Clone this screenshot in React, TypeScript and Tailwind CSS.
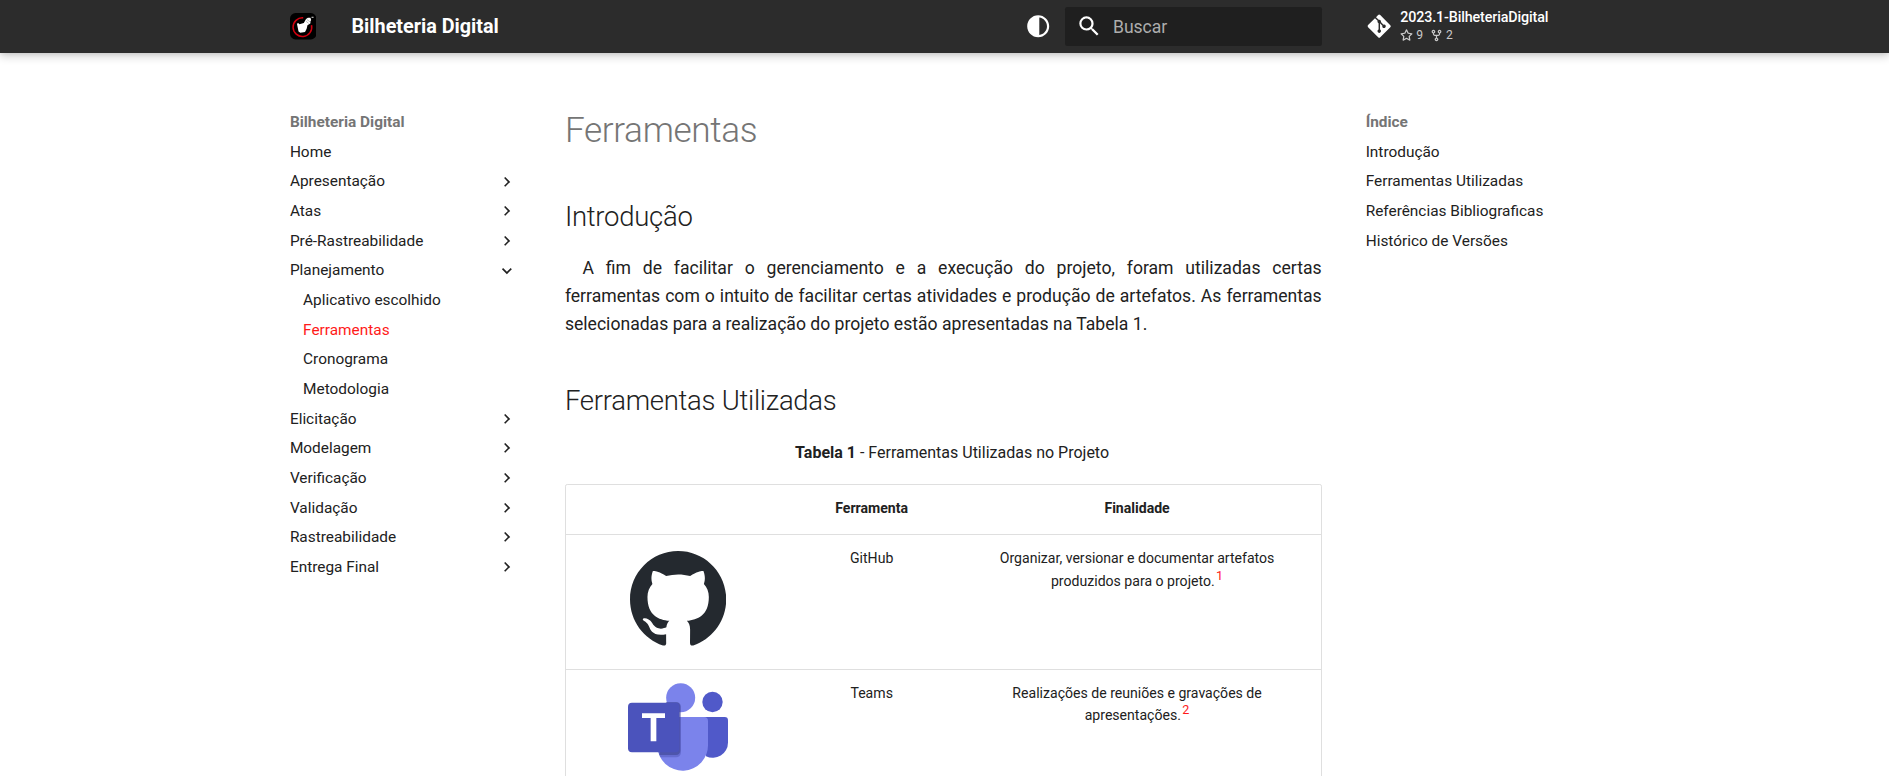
import type { ReactNode } from "react";
import { FaGitAlt } from "react-icons/fa";

type NavItem = { label: string; kind?: "closed" | "open" | "sub" | "active" };

const nav: NavItem[] = [
  { label: "Home" },
  { label: "Apresentação", kind: "closed" },
  { label: "Atas", kind: "closed" },
  { label: "Pré-Rastreabilidade", kind: "closed" },
  { label: "Planejamento", kind: "open" },
  { label: "Aplicativo escolhido", kind: "sub" },
  { label: "Ferramentas", kind: "active" },
  { label: "Cronograma", kind: "sub" },
  { label: "Metodologia", kind: "sub" },
  { label: "Elicitação", kind: "closed" },
  { label: "Modelagem", kind: "closed" },
  { label: "Verificação", kind: "closed" },
  { label: "Validação", kind: "closed" },
  { label: "Rastreabilidade", kind: "closed" },
  { label: "Entrega Final", kind: "closed" },
];

const toc = ["Introdução", "Ferramentas Utilizadas", "Referências Bibliograficas", "Histórico de Versões"];

function Icon({ d, className, box = "0 0 24 24" }: { d: string; className: string; box?: string }) {
  return (
    <svg viewBox={box} className={className} fill="currentColor">
      <path d={d} />
    </svg>
  );
}

const CHEVRON = "M8.59 16.58 13.17 12 8.59 7.41 10 6l6 6-6 6-1.41-1.42Z";
const CONTRAST =
  "M12 22c5.52 0 10-4.48 10-10S17.52 2 12 2 2 6.48 2 12s4.48 10 10 10m1-17.93c3.94.49 7 3.85 7 7.93s-3.05 7.44-7 7.93V4.07Z";
const MAGNIFY =
  "M9.5 3A6.5 6.5 0 0 1 16 9.5c0 1.61-.59 3.09-1.56 4.23l.27.27h.79l5 5-1.5 1.5-5-5v-.79l-.27-.27A6.516 6.516 0 0 1 9.5 16 6.5 6.5 0 0 1 3 9.5 6.5 6.5 0 0 1 9.5 3m0 2C7 5 5 7 5 9.5S7 14 9.5 14 14 12 14 9.5 12 5 9.5 5Z";
const STAR =
  "M8 .25a.75.75 0 0 1 .673.418l1.882 3.815 4.21.612a.75.75 0 0 1 .416 1.279l-3.046 2.97.719 4.192a.751.751 0 0 1-1.088.791L8 12.347l-3.766 1.98a.75.75 0 0 1-1.088-.79l.72-4.194L.818 6.374a.75.75 0 0 1 .416-1.28l4.21-.611L7.327.668A.75.75 0 0 1 8 .25Zm0 2.445L6.615 5.5a.75.75 0 0 1-.564.41l-3.097.45 2.24 2.184a.75.75 0 0 1 .216.664l-.528 3.084 2.769-1.456a.75.75 0 0 1 .698 0l2.77 1.456-.53-3.084a.75.75 0 0 1 .216-.664l2.24-2.183-3.096-.45a.75.75 0 0 1-.564-.41L8 2.694Z";
const FORK =
  "M5 5.372v.878c0 .414.336.75.75.75h4.5a.75.75 0 0 0 .75-.75v-.878a2.25 2.25 0 1 1 1.5 0v.878a2.25 2.25 0 0 1-2.25 2.25h-1.5v2.128a2.251 2.251 0 1 1-1.5 0V8.5h-1.5A2.25 2.25 0 0 1 3.5 6.25v-.878a2.25 2.25 0 1 1 1.5 0ZM5 3.25a.75.75 0 1 0-1.5 0 .75.75 0 0 0 1.5 0Zm6.75.75a.75.75 0 1 0 0-1.5.75.75 0 0 0 0 1.5Zm-3 8.75a.75.75 0 1 0-1.5 0 .75.75 0 0 0 1.5 0Z";
const GITHUB =
  "M48.854 0C21.839 0 0 22 0 49.217c0 21.756 13.993 40.172 33.405 46.69 2.427.49 3.316-1.059 3.316-2.362 0-1.141-.08-5.052-.08-9.127-13.59 2.934-16.42-5.867-16.42-5.867-2.184-5.704-5.42-7.17-5.42-7.17-4.448-3.015.324-3.015.324-3.015 4.934.326 7.523 5.052 7.523 5.052 4.367 7.496 11.404 5.378 14.235 4.074.404-3.178 1.699-5.378 3.074-6.6-10.839-1.141-22.243-5.378-22.243-24.283 0-5.378 1.94-9.778 5.014-13.2-.485-1.222-2.184-6.275.486-13.038 0 0 4.125-1.304 13.426 5.052a46.97 46.97 0 0 1 12.214-1.63c4.125 0 8.33.571 12.213 1.63 9.302-6.356 13.427-5.052 13.427-5.052 2.67 6.763.97 11.816.485 13.038 3.155 3.422 5.015 7.822 5.015 13.2 0 18.905-11.404 23.06-22.324 24.283 1.78 1.548 3.316 4.481 3.316 9.126 0 6.6-.08 11.897-.08 13.526 0 1.304.89 2.853 3.316 2.364 19.412-6.52 33.405-24.935 33.405-46.691C97.707 22 75.788 0 48.854 0z";

function SiteLogo() {
  return (
    <svg viewBox="0 0 26 26" className="size-[26.4px]">
      <rect width="26" height="26" rx="5.5" fill="#000" />
      <path d="M13 4.8A9.2 9.2 0 1 0 21.2 12" fill="none" stroke="#d0000f" strokeWidth="1.5" />
      <path d="M6.8 10.4 8.6 10l.6 1 4.4-1.2 2.2-4 1.8-1.2h2.6l.6 2.2-.8 1.8.2 1.4-1.4 1.2-1.6.8-.8 3.6-1.6 3-4.6.8-1.8-1.2z" fill="#fff" />
      <path d="m16.6 6.4 3 2.2M15.8 8.2l2.6 2" stroke="#777" strokeWidth=".5" />
      <path d="M21.2 4.2h2" stroke="#ddd" strokeWidth="1" />
    </svg>
  );
}

function TeamsLogo() {
  return (
    <svg viewBox="84 68 300 263" className="h-[87.7px] w-[100px]">
      <circle cx="337.5" cy="125" r="30.5" fill="#5059c9" />
      <path d="M300 170h74a10 10 0 0 1 10 10v67a46 46 0 0 1-66 41z" fill="#5059c9" />
      <circle cx="242" cy="112" r="43.5" fill="#7b83eb" />
      <path d="M172 170h140a12 12 0 0 1 12 12v70a76 76 0 0 1-152 6z" fill="#7b83eb" />
      <path d="M198 126h32a14 14 0 0 1 13 13v137a15 15 0 0 1-15 15h-47a76 76 0 0 1-8-34z" fill="#3c43a0" opacity=".35" />
      <path d="M198 126h30a12 12 0 0 1 13 13v132a14 14 0 0 1-13 13h-50z" fill="#34397f" opacity=".45" />
      <rect x="84" y="127" width="154" height="149" rx="12" fill="#4b53bc" />
      <path d="M126 159h69v14h-26v70h-17v-70h-26z" fill="#fff" />
    </svg>
  );
}

function Row({ logo, name, note, children }: { logo: ReactNode; name: string; note: string; children: ReactNode }) {
  return (
    <tr className="h-[134.9px] border-t border-[#dfdfdf] align-top">
      <td className="pt-[12.6px] pr-[17px] pl-[17.6px]">
        <div className="flex justify-center">{logo}</div>
      </td>
      <td className="pt-[11.6px] pr-[17px] pl-[18.6px]">{name}</td>
      <td className="pt-[11.6px] pr-[17px] pl-[18.6px]">
        {children}
        <sup className="relative -top-[6px] ml-[1.4px] align-baseline text-[12.6px] leading-none text-[#ff1a1a]">{note}</sup>
      </td>
    </tr>
  );
}

export default function App() {
  return (
    <div className="h-[776px] overflow-hidden bg-white font-['Roboto',sans-serif] text-[#212121]">
      <header className="relative h-[52.8px] bg-[#2c2c2c] pr-[2.4px] text-white shadow-[0_0_4.4px_#0000001a,0_4.4px_8.8px_#00000033]">
        <div className="mx-auto flex h-full w-[1342px] items-center pl-[17.6px]">
          <SiteLogo />
          <span className="ml-[35.2px] flex-1 text-[19.8px] font-bold">Bilheteria Digital</span>
          <Icon d={CONTRAST} className="size-[26.4px]" />
          <div className="ml-[14px] flex h-[39.6px] w-[256.8px] items-center rounded-[2.2px] bg-[#1f1f1f] pl-[11px]">
            <Icon d={MAGNIFY} className="size-[26.4px]" />
            <span className="ml-[10.6px] pt-px text-[17.6px] tracking-[-0.05px] text-[#adadad]">Buscar</span>
          </div>
          <div className="flex w-[292.5px] items-center pl-[44px]">
            <FaGitAlt className="size-[26.4px]" />
            <div className="ml-[8px]">
              <div className="text-[14.3px] leading-[17.2px] font-medium tracking-[-0.12px]">2023.1-BilheteriaDigital</div>
              <div className="flex items-center text-[12.1px] leading-[17px] text-[#cacaca]">
                <Icon d={STAR} box="0 0 16 16" className="mr-[3px] size-[13px]" />9
                <Icon d={FORK} box="0 0 16 16" className="mr-[3px] ml-[6.9px] size-[13px]" />2
              </div>
            </div>
          </div>
        </div>
      </header>

      <div className="pr-[2.4px]">
        <div className="mx-auto flex w-[1342px] pt-[33px]">
          <nav className="w-[266.2px] shrink-0 pt-[26.4px] pr-[22.2px] pl-[17.6px] text-[15.4px] leading-[20.02px]">
            <div className="font-bold text-[#757575]">Bilheteria Digital</div>
            {nav.map((n) => (
              <div key={n.label} className="mt-[9.625px] flex h-[20.02px] items-center justify-between">
                <span className={n.kind === "active" ? "ml-[13.2px] text-[#ff1a1a]" : n.kind === "sub" ? "ml-[13.2px]" : ""}>{n.label}</span>
                {n.kind === "closed" && <Icon d={CHEVRON} className="size-[19.8px]" />}
                {n.kind === "open" && <Icon d={CHEVRON} className="size-[19.8px] rotate-90" />}
              </div>
            ))}
          </nav>

          <main className="mx-[26.4px] w-[756.8px] shrink-0 pt-[22px] text-[17.6px] leading-[28.16px]">
            <h1 className="mb-[44px] text-[35.2px] leading-[45.76px] font-light tracking-[-0.01em] text-[#757575]">Ferramentas</h1>
            <h2 className="mb-[17.6px] text-[27.5px] leading-[38.5px] font-light tracking-[-0.01em]">Introdução</h2>
            <p className="text-justify indent-[17.6px]">
              A fim de facilitar o gerenciamento e a execução do projeto, foram utilizadas certas ferramentas com o intuito de facilitar certas
              atividades e produção de artefatos. As ferramentas selecionadas para a realização do projeto estão apresentadas na Tabela 1.
            </p>
            <h2 className="mt-[44px] mb-[17.6px] text-[27.5px] leading-[38.5px] font-light tracking-[-0.01em]">Ferramentas Utilizadas</h2>
            <p className="pt-px text-center indent-[17.6px] text-[16px] leading-[28.16px]">
              <b>Tabela 1</b> - Ferramentas Utilizadas no Projeto
            </p>
            <div className="mt-[16.6px] rounded-[2.2px] border border-[#dfdfdf]">
              <table className="w-full table-fixed border-collapse text-center text-[14.08px] leading-[22.53px]">
                <colgroup>
                  <col className="w-[224px]" />
                  <col className="w-[162px]" />
                  <col />
                </colgroup>
                <thead>
                  <tr className="h-[50px] align-top">
                    <th />
                    <th className="pt-[12.2px] pl-[1.6px] font-bold">Ferramenta</th>
                    <th className="pt-[12.2px] pl-[1.6px] font-bold">Finalidade</th>
                  </tr>
                </thead>
                <tbody>
                  <Row name="GitHub" note="1" logo={<Icon d={GITHUB} box="0 0 98 96" className="mt-[3px] h-[94.6px] w-[96.6px] text-[#24292f]" />}>
                    Organizar, versionar e documentar artefatos produzidos para o projeto.
                  </Row>
                  <Row name="Teams" note="2" logo={<TeamsLogo />}>
                    Realizações de reuniões e gravações de apresentações.
                  </Row>
                </tbody>
              </table>
            </div>
          </main>

          <aside className="w-[266.2px] shrink-0 pt-[26.4px] pl-[17.6px] text-[15.4px] leading-[20.02px]">
            <div className="font-bold text-[#757575]">Índice</div>
            {toc.map((t) => (
              <div key={t} className="mt-[9.625px]">
                {t}
              </div>
            ))}
          </aside>
        </div>
      </div>
    </div>
  );
}
